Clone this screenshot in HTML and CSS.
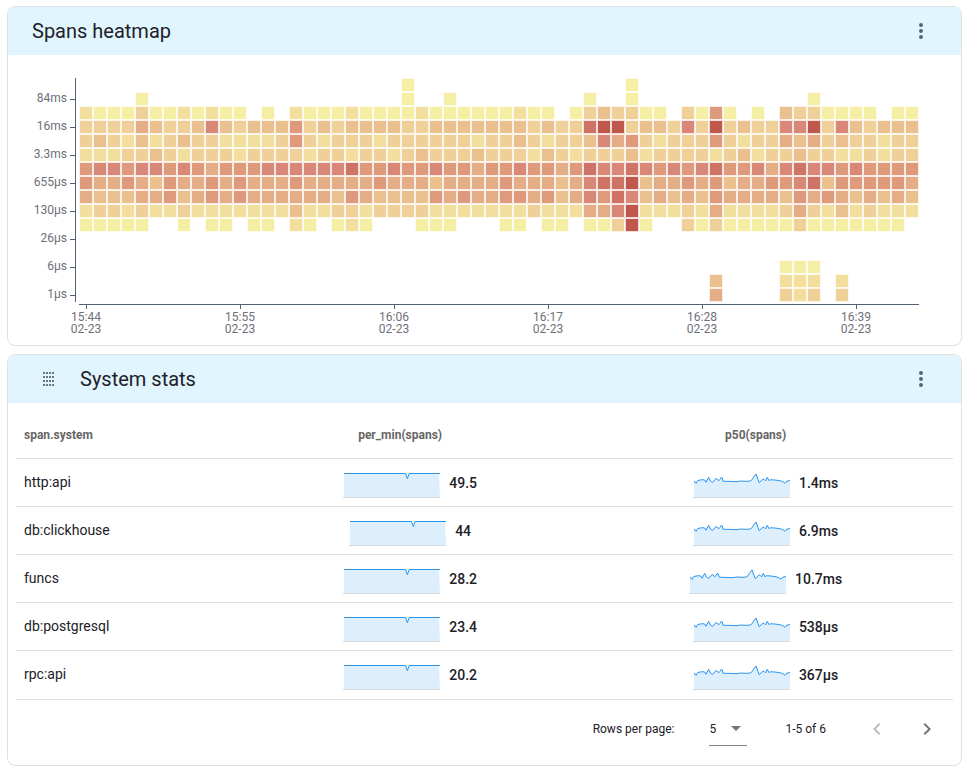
FILE: index.html
```html
<!DOCTYPE html>
<html lang="en">
<head>
<meta charset="utf-8">
<title>Spans dashboard</title>
<link rel="stylesheet" href="styles.css">
</head>
<body>
<svg class="defs" aria-hidden="true">
  <symbol id="dots" viewBox="0 0 24 24"><path d="M12 16a2 2 0 0 1 2 2 2 2 0 0 1-2 2 2 2 0 0 1-2-2 2 2 0 0 1 2-2m0-6a2 2 0 0 1 2 2 2 2 0 0 1-2 2 2 2 0 0 1-2-2 2 2 0 0 1 2-2m0-6a2 2 0 0 1 2 2 2 2 0 0 1-2 2 2 2 0 0 1-2-2 2 2 0 0 1 2-2z"/></symbol>
  <symbol id="rate" viewBox="0 0 98 30">
    <path class="area" d="M1 5H62.500L64.300 10L66.200 5H96L97 29H1z"/>
    <path class="base" d="M0 29.500H97"/>
    <path class="line" d="M1 5.500H62.500L64.300 10.700L66.200 5.500H97"/>
  </symbol>
  <symbol id="latency" viewBox="0 0 98 30">
    <path class="area" d="M1 13L3 15.300L4.500 12.700L7 12L10 11.700L12 12.300L13 14.300L15.700 9.300L17.300 13L19.300 14.300L21 13L23 10.300L25 12L26 12.700L28.700 9L30.300 13.300H35L43 13.700L48 13L53 13.300L57 13L58.500 12.300L60.500 9.300L63 6L66.300 14.700L70 10.700L72.700 12.700L74.300 9.300L76 12.700L77.500 11.700L82 12L88 13L90.300 14L92 15.300L94 13L97 12.700V29H1z"/>
    <path class="base" d="M0 29.500H97"/>
    <path class="line" d="M1 13L3 15.300L4.500 12.700L7 12L10 11.700L12 12.300L13 14.300L15.700 9.300L17.300 13L19.300 14.300L21 13L23 10.300L25 12L26 12.700L28.700 9L30.300 13.300H35L43 13.700L48 13L53 13.300L57 13L58.500 12.300L60.500 9.300L63 6L66.300 14.700L70 10.700L72.700 12.700L74.300 9.300L76 12.700L77.500 11.700L82 12L88 13L90.300 14L92 15.300L94 13L97 12.700"/>
  </symbol>
</svg>
<main class="dashboard">
  <section class="card">
    <header class="card-header">
      <h2 class="title">Spans heatmap</h2>
      <button class="icon-button" aria-label="Heatmap menu"><svg class="icon"><use href="#dots"/></svg></button>
    </header>
    <svg class="heatmap" id="heatmap" viewBox="8 55 953 290" role="img" aria-label="Spans heatmap"></svg>
  </section>

  <section class="card">
    <header class="card-header">
      <button class="drag-handle" aria-label="Move panel"><svg class="drag-icon" viewBox="0 0 12 14"><path d="M0 0h2v2H0zM3 0h2v2H3zM6 0h2v2H6zM9 0h2v2H9zM0 4h2v2H0zM3 4h2v2H3zM6 4h2v2H6zM9 4h2v2H9zM0 8h2v2H0zM3 8h2v2H3zM6 8h2v2H6zM9 8h2v2H9zM0 12h2v2H0zM3 12h2v2H3zM6 12h2v2H6zM9 12h2v2H9z"/></svg></button>
      <h2 class="title">System stats</h2>
      <button class="icon-button" aria-label="Stats menu"><svg class="icon"><use href="#dots"/></svg></button>
    </header>
    <div class="card-body">
      <table class="stats">
        <colgroup><col class="col-system"><col><col class="col-latency"></colgroup>
        <thead>
          <tr><th scope="col">span.system</th><th scope="col" class="metric">per_min(spans)</th><th scope="col" class="metric">p50(spans)</th></tr>
        </thead>
        <tbody>
          <tr><td class="system">http:api</td><td><div class="cell"><svg class="spark"><use href="#rate"/></svg>49.5</div></td><td><div class="cell"><svg class="spark"><use href="#latency"/></svg>1.4ms</div></td></tr>
          <tr><td class="system">db:clickhouse</td><td><div class="cell"><svg class="spark"><use href="#rate"/></svg>44</div></td><td><div class="cell"><svg class="spark"><use href="#latency"/></svg>6.9ms</div></td></tr>
          <tr><td class="system">funcs</td><td><div class="cell"><svg class="spark"><use href="#rate"/></svg>28.2</div></td><td><div class="cell"><svg class="spark"><use href="#latency"/></svg>10.7ms</div></td></tr>
          <tr><td class="system">db:postgresql</td><td><div class="cell"><svg class="spark"><use href="#rate"/></svg>23.4</div></td><td><div class="cell"><svg class="spark"><use href="#latency"/></svg>538µs</div></td></tr>
          <tr><td class="system">rpc:api</td><td><div class="cell"><svg class="spark"><use href="#rate"/></svg>20.2</div></td><td><div class="cell"><svg class="spark"><use href="#latency"/></svg>367µs</div></td></tr>
        </tbody>
      </table>
      <footer class="pager">
        <label for="rows">Rows per page:</label>
        <div class="select-wrap">
          <select id="rows"><option>5</option><option>10</option><option>15</option></select>
          <svg class="caret" viewBox="0 0 10 5"><path d="M0 0h10L5 5z"/></svg>
        </div>
        <span class="range">1-5 of 6</span>
        <button class="icon-button" aria-label="Previous page" disabled><svg class="icon" viewBox="0 0 24 24"><path d="M15.410 16.580L10.830 12l4.580-4.590L14 6l-6 6 6 6z"/></svg></button>
        <button class="icon-button" aria-label="Next page"><svg class="icon" viewBox="0 0 24 24"><path d="M8.590 16.580L13.170 12 8.590 7.410 10 6l6 6-6 6z"/></svg></button>
      </footer>
    </div>
  </section>
</main>
<script src="heatmap.js"></script>
</body>
</html>
```
FILE: heatmap.js
```js
// One string per latency bucket, one character per minute; "." is an empty cell.
const rows = [
  ".......................0...............0....................",
  "....0..................0..0.........0..0............0.......",
  "100020010100.0.1000100001000000100.0232200.2050.0.3220000.00",
  "222243223632333523233332233333332322788233262823226682632333",
  "232131232211112521222122222212232122364521222521224342322122",
  "111223212221222212212212322232221321222312222123122322112122",
  "566566565455566666675565565545565545766765656755646766565555",
  "544543544545444544444544434444544434677834454534455673555554",
  "433344534545444444354333354544554534657634343544443545434343",
  "122121121111111311221222211111112111446811121411112421312111",
  "00000..0.00.00.10.010...000...00.00.00280..2020000020000000.",
  "",
  "",
  "..................................................000.......",
  ".............................................3....111.1.....",
  ".............................................4....212.2....."
];
const NS = "http://www.w3.org/2000/svg";
const chart = document.getElementById("heatmap");
function add(name, attrs, text) {
  const node = document.createElementNS(NS, name);
  for (const key in attrs) node.setAttribute(key, attrs[key]);
  if (text) node.textContent = text;
  chart.append(node);
}
const left = 79, top0 = 78, step = 14;
rows.forEach((row, r) => [...row].forEach((level, c) => {
  if (level === ".") return;
  const x = left + c * step, y = top0 + r * step;
  add("rect", { x, y, width: 14, height: 14, class: "halo level-" + level });
  add("rect", { x: x + 1, y: y + 1, width: 12, height: 12, class: "level-" + level });
}));
add("path", { class: "axis", d: "M75.5 78V302M79 304.5H919" });
["84ms", "16ms", "3.3ms", "655µs", "130µs", "26µs", "6µs", "1µs"].forEach((label, i) => {
  const y = 99 + i * 28;
  add("path", { class: "axis", d: `M70 ${y + 0.5}H75` });
  add("text", { class: "tick-y", x: 67, y: y + 3 }, label);
});
["15:44", "15:55", "16:06", "16:17", "16:28", "16:39"].forEach((label, i) => {
  const x = 86 + i * 154;
  add("path", { class: "axis", d: `M${x + 0.5} 304V309` });
  add("text", { class: "tick-x", x, y: 321 });
  const text = chart.lastChild;
  [[label, 321], ["02-23", 333]].forEach(([line, y]) => {
    const span = document.createElementNS(NS, "tspan");
    span.setAttribute("x", x);
    span.setAttribute("y", y);
    span.textContent = line;
    text.append(span);
  });
});
```
FILE: styles.css
```css
* { box-sizing: border-box; }
body {
  margin: 0;
  background: #fff;
  color: #212128;
  font: 14px/20px Roboto, sans-serif;
}
.defs { position: absolute; width: 0; height: 0; }
.dashboard {
  display: flex;
  flex-direction: column;
  gap: 8px;
  padding: 6px 7px 10px;
}
.card {
  border: 1px solid #e0e0e0;
  border-radius: 8px;
  overflow: hidden;
}
.card-header {
  display: flex;
  align-items: center;
  height: 48px;
  padding: 0 22px 0 24px;
  background: #e1f5fe;
}
.title {
  flex: 1;
  margin: 0;
  font-size: 20px;
  font-weight: 400;
  line-height: 32px;
}
button {
  display: flex;
  align-items: center;
  justify-content: center;
  padding: 0;
  border: 0;
  background: none;
  color: #546478;
}
.icon-button { width: 36px; height: 36px; }
.icon { width: 24px; height: 24px; fill: currentColor; }
.drag-handle { width: 34px; height: 32px; margin-right: 14px; }
.drag-icon { width: 12px; height: 14px; fill: #6c7580; }

.heatmap { display: block; width: 100%; height: auto; }
.heatmap text { fill: #6e7079; font-size: 12px; }
.tick-y { text-anchor: end; }
.tick-x { text-anchor: middle; }
.axis { fill: none; stroke: #545f78; }
.halo { opacity: 0.2; }
.level-0 { fill: #f5eea5; }
.level-1 { fill: #f2df9d; }
.level-2 { fill: #efd098; }
.level-3 { fill: #eac08e; }
.level-4 { fill: #e5ad85; }
.level-5 { fill: #df997b; }
.level-6 { fill: #d98877; }
.level-7 { fill: #cf7366; }
.level-8 { fill: #bf574a; }

.card-body { padding: 8px 8px 0; }
.stats {
  width: 100%;
  border-collapse: separate;
  border-spacing: 0;
  table-layout: fixed;
}
.col-system { width: 226px; }
.col-latency { width: 40%; }
th, td {
  height: 48px;
  padding: 0 8px;
  border-bottom: 1px solid #e0e0e0;
  text-align: left;
}
th { color: #666; font-size: 12px; font-weight: 700; }
.metric { padding-right: 28px; text-align: center; }
.system { padding-bottom: 2px; }
tbody tr:last-child td { height: 49px; }
.cell {
  display: flex;
  align-items: center;
  justify-content: center;
  gap: 8px;
  font-weight: 500;
}
.spark { width: 98px; height: 30px; }
.area { fill: #ddeefd; }
.base { fill: none; stroke: #d4dade; }
.line { fill: none; stroke: #2b95ea; }

.pager {
  display: flex;
  align-items: center;
  justify-content: flex-end;
  padding: 11px 8px 18px 0;
  font-size: 12px;
}
.select-wrap {
  display: flex;
  align-items: center;
  width: 38px;
  height: 34px;
  margin: 0 38px 0 35px;
  border-bottom: 1px solid #868686;
}
select {
  flex: 1;
  min-width: 0;
  height: 32px;
  padding: 0;
  border: 0;
  appearance: none;
  background: none;
  color: inherit;
  font: inherit;
}
.caret { width: 10px; height: 5px; margin-right: 6px; fill: #757575; }
.range { margin-right: 33px; }
.pager .icon-button + .icon-button { margin-left: 14px; }
.pager .icon-button { color: #757575; }
.pager .icon-button:disabled { color: #bdbdbd; }
```
